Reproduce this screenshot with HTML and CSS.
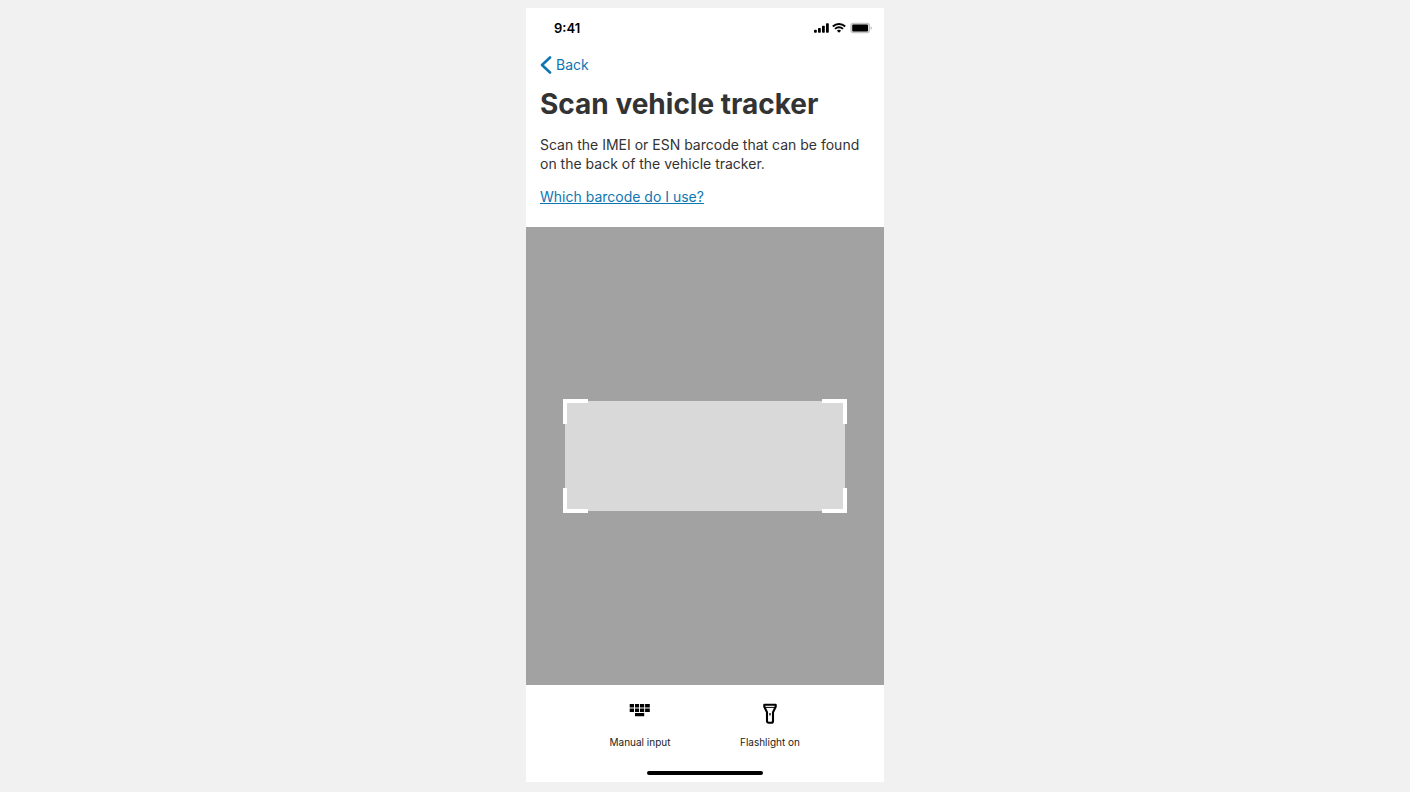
FILE: index.html
```
<!DOCTYPE html>
<html lang="en">
<head>
  <meta charset="UTF-8">
  <meta name="viewport" content="width=device-width, initial-scale=1">
  <title>Scan vehicle tracker</title>
  <link rel="stylesheet" href="styles.css">
</head>
<body>
  <main class="phone">
    <div class="status">
      <span class="time">9:41</span>
      <svg class="signal" width="16" height="10" viewBox="0 0 16 10">
        <rect x="1" y="6.7" width="2.8" height="3" rx=".8"/>
        <rect x="5" y="5" width="2.8" height="4.7" rx=".8"/>
        <rect x="9" y="2.7" width="2.8" height="7" rx=".8"/>
        <rect x="13" y="0.3" width="2.8" height="9.4" rx=".8"/>
      </svg>
      <svg class="wifi" width="14" height="10" viewBox="0 0 14 10" fill="none" stroke="#000" stroke-width="1.9">
        <path d="M.8 3.5a8.9 8.9 0 0 1 12.4 0"/>
        <path d="M3 5.9a5.8 5.8 0 0 1 8 0"/>
        <path d="M7 9.8 4.9 7.8a3 3 0 0 1 4.2 0z" fill="#000" stroke="none"/>
      </svg>
      <svg class="battery" width="22" height="12" viewBox="0 0 22 12">
        <rect x=".9" y="1.3" width="18.6" height="9.4" rx="2.4" fill="#ddd" stroke="#c4c4c4" stroke-width="1.2"/>
        <rect x="2.2" y="2.6" width="15.8" height="6.8" rx="1.2"/>
        <path d="M20.6 4.2q1.2.4 1.2 1.8t-1.2 1.8z" fill="#b5b5b5"/>
      </svg>
    </div>

    <header class="intro">
      <a class="back" href="#">
        <svg width="12" height="18" viewBox="0 0 12 18" fill="none" stroke="currentColor" stroke-width="2.6" stroke-linecap="round" stroke-linejoin="round">
          <path d="M10 1.5 2 9l8 7.5"/>
        </svg>
        Back
      </a>
      <h1>Scan vehicle tracker</h1>
      <p>Scan the IMEI or ESN barcode that can be found on the back of the vehicle tracker.</p>
      <a class="help" href="#">Which barcode do I use?</a>
    </header>

    <section class="camera">
      <div class="frame">
        <span class="corner top left"></span>
        <span class="corner top right"></span>
        <span class="corner bottom left"></span>
        <span class="corner bottom right"></span>
      </div>
    </section>

    <footer class="actions">
      <div class="buttons">
        <button type="button">
          <svg width="22" height="22" viewBox="0 0 22 22">
            <path d="M.7 1h4.3v3.6H.7zM6 1h4.1v3.6H6zM11 1h4.2v3.6H11zM16.1 1h4.7v3.6h-4.7zM.7 5.6h4.3v3.5H.7zM6 5.6h4.1v3.5H6zM11 5.6h4.2v3.5H11zM16.1 5.6h4.7v3.5h-4.7zM6 10h9.2v3.3H6z"/>
          </svg>
          Manual input
        </button>
        <button type="button">
          <svg width="22" height="22" viewBox="0 0 22 22" fill="none" stroke="#000" stroke-width="2.1" stroke-linejoin="round">
            <path d="M5.3 1.8h11.4v1.9L14 9.2v8.7q0 1.8-1.8 1.8H9.8Q8 19.7 8 17.9V9.2L5.3 3.7z"/>
            <path d="M6 4.4h10" stroke-width="1"/>
            <path d="M11 10v2.6" stroke-width="1.3"/>
          </svg>
          Flashlight on
        </button>
      </div>
      <div class="home-bar"></div>
    </footer>
  </main>
</body>
</html>
```
FILE: styles.css
```
* { box-sizing: border-box; }
body { margin: 0; padding: 8px 0 10px; background: #f1f1f1; color: #333; font-family: Inter, "Liberation Sans", sans-serif; font-size: 14px; line-height: 19px; }
svg { display: block; }
a { color: #0e76b3; }

.phone { display: flex; flex-direction: column; width: 100%; max-width: 358px; min-height: calc(100vh - 18px); margin: 0 auto; background: #fff; }

.status { display: flex; align-items: center; gap: 4px; padding: 10px 12px 0 28px; color: #000; }
.signal { margin-right: -1px; }
.time { margin-right: auto; font-size: 13px; font-weight: 600; line-height: 20px; }

.intro { padding: 17px 14px 21px; }
.back { display: flex; align-items: center; gap: 4px; width: fit-content; text-decoration: none; }
h1 { margin: 13px 0 14px; font-size: 28px; line-height: 34px; font-weight: 700; }
p { margin: 0 0 14px; }
.help { display: block; width: fit-content; text-underline-offset: 1px; text-decoration-thickness: 1px; }

.camera { flex: 1; display: flex; align-items: center; justify-content: center; padding: 20px 39px; background: #a2a2a2; }
.frame { position: relative; width: 100%; height: 110px; background: #d9d9d9; }
.corner { position: absolute; width: 25px; height: 25px; border: 0 solid #fff; }
.top { top: -2px; border-top-width: 4px; }
.bottom { bottom: -2px; border-bottom-width: 4px; }
.left { left: -2px; border-left-width: 4px; }
.right { right: -2px; border-right-width: 4px; }

.actions { padding: 18px 0 7px; }
.buttons { display: grid; grid-template-columns: 130px 130px; justify-content: center; }
button { display: flex; flex-direction: column; align-items: center; gap: 9px; padding: 0; border: 0; background: none; color: #222; font-family: inherit; font-size: 10px; line-height: 16px; cursor: pointer; }
.home-bar { width: 116px; height: 4px; margin: 21px auto 0; border-radius: 2px; background: #000; }
```
